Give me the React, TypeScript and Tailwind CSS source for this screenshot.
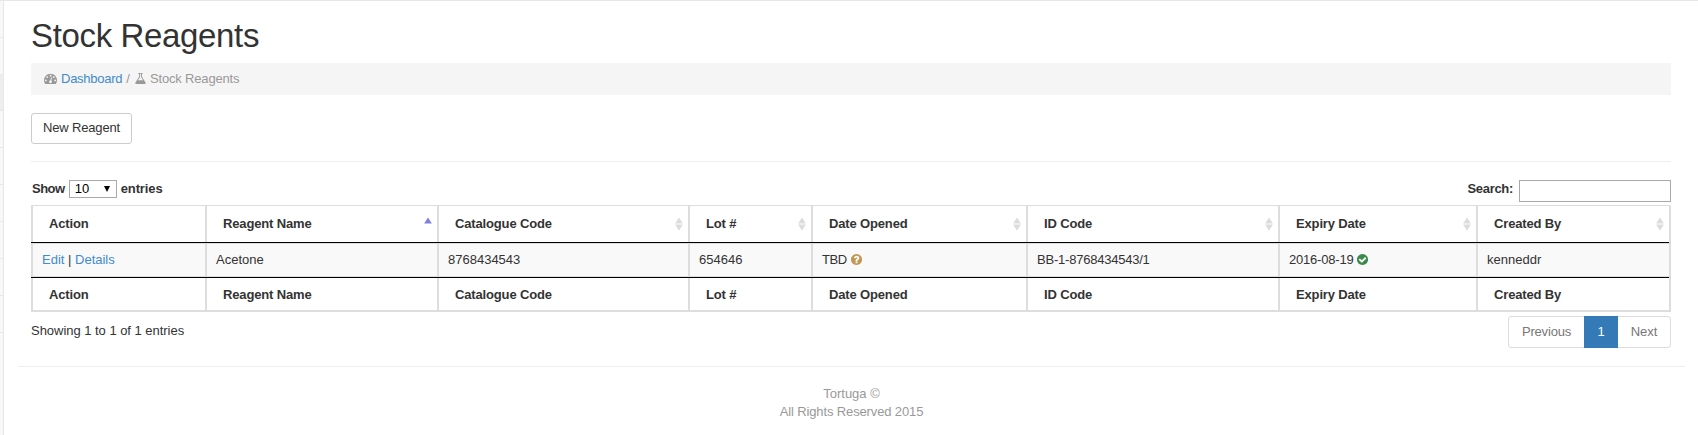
import type { ReactNode } from "react";

const DISC =
  "q0 209-103 385.5t-279.5 279.5-385.5 103-385.5-103-279.5-279.5-103-385.5 103-385.5 279.5-279.5 385.5-103 385.5 103 279.5 279.5 103 385.5z";

const PATHS = {
  dashboard:
    "M384 1152q0-53-37.5-90.5t-90.5-37.5-90.5 37.5-37.5 90.5 37.5 90.5 90.5 37.5 90.5-37.5 37.5-90.5zm192-448q0-53-37.5-90.5t-90.5-37.5-90.5 37.5-37.5 90.5 37.5 90.5 90.5 37.5 90.5-37.5 37.5-90.5zm428 481l101-382q6-26-7.5-48.5t-38.5-29.5-48 6.5-30 39.5l-101 382q-60 5-107 43.5t-63 98.5q-20 77 20 146t117 89 146-20 89-117q16-60-6-117t-72-91zm660-33q0-53-37.5-90.5t-90.5-37.5-90.5 37.5-37.5 90.5 37.5 90.5 90.5 37.5 90.5-37.5 37.5-90.5zm-640-640q0-53-37.5-90.5t-90.5-37.5-90.5 37.5-37.5 90.5 37.5 90.5 90.5 37.5 90.5-37.5 37.5-90.5zm448 192q0-53-37.5-90.5t-90.5-37.5-90.5 37.5-37.5 90.5 37.5 90.5 90.5 37.5 90.5-37.5 37.5-90.5zm320 448q0 261-141 483-19 29-54 29h-1402q-35 0-54-29-141-221-141-483 0-182 71-348t191-286 286-191 348-71 348 71 286 191 191 286 71 348z",
  flask:
    "M1591 1448q56 89 21.5 152.5t-140.5 63.5h-1152q-106 0-140.5-63.5t21.5-152.5l503-793v-399h-64q-26 0-45-19t-19-45 19-45 45-19h512q26 0 45 19t19 45-19 45-45 19h-64v399zm-779-725l-272 429h712l-272-429-20-31v-436h-128v436z",
  question:
    "M1024 1376v-192q0-14-9-23t-23-9h-192q-14 0-23 9t-9 23v192q0 14 9 23t23 9h192q14 0 23-9t9-23zm256-672q0-88-55.5-163t-138.5-116-170-41q-243 0-371 213-15 24 8 42l132 100q7 6 19 6 16 0 25-12 53-68 86-92 34-24 86-24 48 0 85.5 26t37.5 59q0 38-20 61t-68 45q-63 28-115.5 86.5t-52.5 125.5v36q0 14 9 23t23 9h192q14 0 23-9t9-23q0-19 21.5-49.5t54.5-49.5q32-18 49-28.5t46-35 44.5-48 28-60.5 12.5-81zm384 192" +
    DISC,
  check:
    "M1412 734q0-28-18-46l-91-90q-19-19-45-19t-45 19l-408 407-226-226q-19-19-45-19t-45 19l-91 90q-18 18-18 46 0 27 18 45l362 362q19 19 45 19 27 0 46-19l543-543q18-18 18-45zm252 162" +
    DISC,
};

function Icon({ name, className }: { name: keyof typeof PATHS; className: string }) {
  return (
    <svg viewBox="0 0 1792 1792" className={`mb-0.5 size-[13px] shrink-0 ${className}`} fill="currentColor">
      <path d={PATHS[name]} />
    </svg>
  );
}

function SortIcon({ active }: { active?: boolean }) {
  return (
    <svg viewBox="0 0 8 14" className="h-3.5 w-2 shrink-0">
      <path d="M4 0.5L7.9 6.6H0.1z" fill={active ? "#8080e0" : "#dcdcdc"} />
      {!active && <path d="M0.1 7.6H7.9L4 13.7z" fill="#dcdcdc" />}
    </svg>
  );
}

const COLS = "grid grid-cols-[174px_232px_251px_123px_215px_252px_198px_193px]";

const HEADERS = ["Action", "Reagent Name", "Catalogue Code", "Lot #", "Date Opened", "ID Code", "Expiry Date", "Created By"];

const CELLS: ReactNode[] = [
  <span>
    <a className="text-[#428bca]">Edit</a> | <a className="text-[#428bca]">Details</a>
  </span>,
  "Acetone",
  "8768434543",
  "654646",
  <>
    <span className="tracking-[-0.4px]">TBD</span>
    <Icon name="question" className="ml-[3px] text-[#c09853]" />
  </>,
  <span className="tracking-[-0.22px]">BB-1-8768434543/1</span>,
  <>
    <span className="tracking-[-0.2px]">2016-08-19</span>
    <Icon name="check" className="ml-0.5 text-[#3c8a4a]" />
  </>,
  "kenneddr",
];

export default function App() {
  return (
    <div className="flex h-[435px] w-[1698px] flex-col overflow-hidden border-t border-[#e7e7e7] bg-white font-['Liberation_Sans',Arial,sans-serif] text-[13px] leading-[18px] text-[#333]">
      <div className="flex flex-1">
        <aside className="w-1 shrink-0 border-r border-[#e7e7e7] bg-[#f8f8f8]">
          {[0, 1, 2, 3, 4, 5, 6, 7, 8].map((i) => (
            <div key={i} className={i === 2 ? "h-9 border-b border-[#e7e7e7] bg-[#eee]" : "h-[37px] border-b border-[#e7e7e7]"} />
          ))}
        </aside>
        <main className="flex flex-1 flex-col pr-[13px] pl-3.5">
          <div className="flex flex-col pr-3.5 pl-[13px]">
            <h1 className="mt-4 h-[46px] text-[33px] leading-[38px] tracking-[-0.35px]">Stock Reagents</h1>
            <nav className="flex h-8 items-center bg-[#f5f5f5] pl-[13px] text-[#999]">
              <Icon name="dashboard" className="mr-1" />
              <a className="tracking-[-0.25px] text-[#428bca]">Dashboard</a>
              <span className="mx-1">/</span>
              <Icon name="flask" className="mr-[3px]" />
              <span className="tracking-[-0.17px]">Stock Reagents</span>
            </nav>
            <button className="mt-[18px] h-[31px] w-[101px] rounded-[3px] border border-[#ccc] pb-0.5 tracking-[-0.17px]">New Reagent</button>
            <hr className="mt-[17px] border-[#eee]" />
            <div className="flex h-[43px] justify-between font-bold">
              <label className="mt-[18px] flex h-[18px] items-center pl-px">
                <span className="tracking-[-0.5px]">Show</span>
                <span className="mx-1 flex h-[18px] w-12 items-center justify-between border border-[#a9a9a9] pr-1.5 pl-[5px] font-normal text-black">
                  10
                  <svg viewBox="0 0 6 6" className="size-1.5">
                    <path d="M0 0H6L3 6z" />
                  </svg>
                </span>
                <span className="tracking-[-0.1px]">entries</span>
              </label>
              <label className="mt-[18px] flex h-[22px] items-center gap-1.5">
                <span className="pb-1 tracking-[-0.3px]">Search:</span>
                <input className="h-[22px] w-[152px] border border-[#a9a9a9] bg-white" />
              </label>
            </div>
            <div className="w-[1640px] border-t border-r-2 border-b-2 border-[#ddd]">
              <div className={`${COLS} border-b border-black font-bold`}>
                {HEADERS.map((h, i) => (
                  <div key={h} className="flex h-9 items-center justify-between border-l-2 border-[#ddd] pr-[5px] pl-4 tracking-[-0.15px]">
                    {h}
                    {i > 0 && <SortIcon active={i === 1} />}
                  </div>
                ))}
              </div>
              <div className={`${COLS} border-y border-[#ddd] bg-[#f9f9f9]`}>
                {CELLS.map((c, i) => (
                  <div key={i} className="flex h-8 items-center border-l-2 border-[#ddd] pl-[9px]">
                    {c}
                  </div>
                ))}
              </div>
              <div className={`${COLS} border-t border-black font-bold`}>
                {HEADERS.map((h) => (
                  <div key={h} className="flex h-8 items-center border-l-2 border-[#ddd] pt-0.5 pl-4 tracking-[-0.15px]">
                    {h}
                  </div>
                ))}
              </div>
            </div>
            <div className="flex h-[54px] justify-between pt-1">
              <span className="pt-[6px] tracking-[-0.03px]">Showing 1 to 1 of 1 entries</span>
              <div className="flex h-8 rounded-[3px] border border-[#ddd] text-[#777]">
                <span className="w-[75px] pt-1.5 text-center tracking-[-0.18px]">Previous</span>
                <span className="-my-px w-[34px] bg-[#337ab7] pt-[7px] text-center text-white">1</span>
                <span className="w-[52px] pt-1.5 text-center tracking-[-0.1px]">Next</span>
              </div>
            </div>
          </div>
          <hr className="border-[#eee]" />
          <footer className="pt-[18px] text-center text-[#999]">
            Tortuga ©<br />
            <span className="tracking-[-0.13px]">All Rights Reserved 2015</span>
          </footer>
        </main>
      </div>
    </div>
  );
}
